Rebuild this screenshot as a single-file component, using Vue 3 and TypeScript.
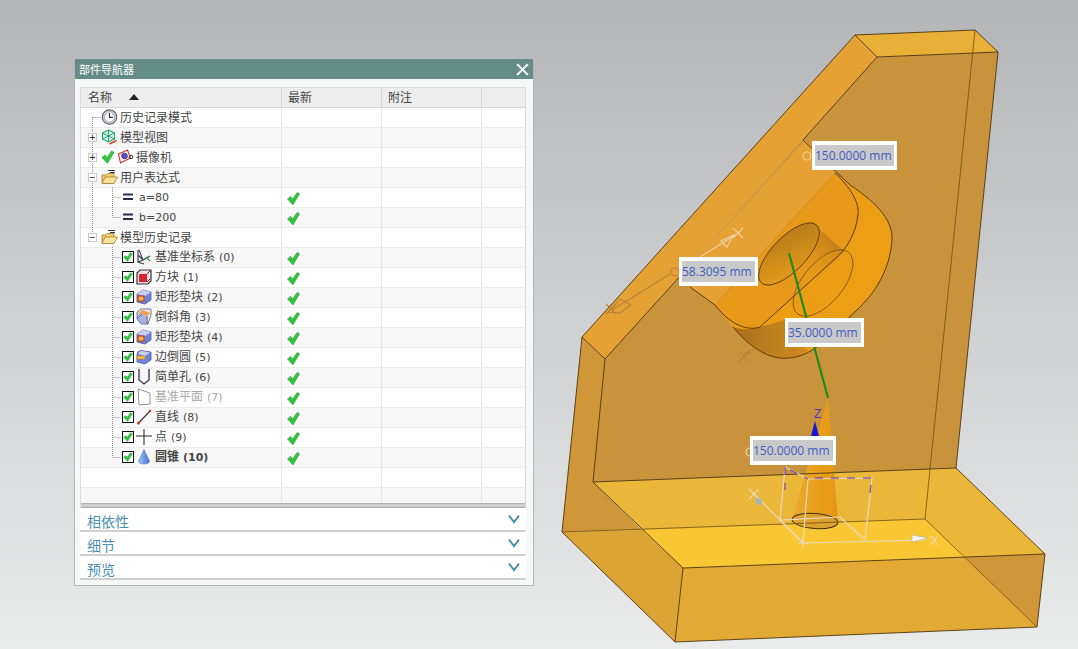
<script setup lang="ts">
type Row = {
  label?: string
  latin?: string
  level?: 0 | 1 | 2
  expander?: '+' | '-'
  status?: boolean
  checkbox?: boolean
  icon?: string
  current?: boolean
  muted?: boolean
  bold?: boolean
}

const rows: Row[] = [
  { label: '历史记录模式', level: 0, icon: 'clock' },
  { label: '模型视图', level: 0, expander: '+', icon: 'view' },
  { label: '摄像机', level: 0, expander: '+', icon: 'camera', status: true },
  { label: '用户表达式', level: 0, expander: '-', icon: 'folder' },
  { latin: 'a=80', level: 1, icon: 'equals', current: true },
  { latin: 'b=200', level: 1, icon: 'equals', current: true },
  { label: '模型历史记录', level: 0, expander: '-', icon: 'folder' },
  { label: '基准坐标系', latin: '(0)', level: 2, icon: 'csys', checkbox: true, current: true },
  { label: '方块', latin: '(1)', level: 2, icon: 'block', checkbox: true, current: true },
  { label: '矩形垫块', latin: '(2)', level: 2, icon: 'pad', checkbox: true, current: true },
  { label: '倒斜角', latin: '(3)', level: 2, icon: 'chamfer', checkbox: true, current: true },
  { label: '矩形垫块', latin: '(4)', level: 2, icon: 'pad', checkbox: true, current: true },
  { label: '边倒圆', latin: '(5)', level: 2, icon: 'blend', checkbox: true, current: true },
  { label: '简单孔', latin: '(6)', level: 2, icon: 'hole', checkbox: true, current: true },
  { label: '基准平面', latin: '(7)', level: 2, icon: 'plane', checkbox: true, current: true, muted: true },
  { label: '直线', latin: '(8)', level: 2, icon: 'line', checkbox: true, current: true },
  { label: '点', latin: '(9)', level: 2, icon: 'point', checkbox: true, current: true },
  { label: '圆锥', latin: '(10)', level: 2, icon: 'cone', checkbox: true, current: true, bold: true },
  {},
  {}
]

const sections = ['相依性', '细节', '预览']

const dimensions = [
  { text: '150.0000 mm', cls: 'dim-a' },
  { text: '58.3095 mm', cls: 'dim-b' },
  { text: '35.0000 mm', cls: 'dim-c' },
  { text: '150.0000 mm', cls: 'dim-d' }
]
</script>

<template>
  <div class="screen">
    <svg class="defs" width="0" height="0">
      <defs>
        <symbol id="i-check" viewBox="0 0 14 15">
          <path d="M0.5 8 L4 5.2 L6 8 L11 0.8 L13.6 2.6 L6.4 14.4 Z" fill="#2fc43c" stroke="#1d9a2b" stroke-width=".5" />
        </symbol>
        <symbol id="i-clock" viewBox="0 0 16 16">
          <circle cx="8" cy="8" r="7.2" fill="#c9ced6" stroke="#5f6772" stroke-width="1.2" />
          <circle cx="8" cy="8" r="5" fill="#fff" stroke="#8f97a2" stroke-width=".6" />
          <path d="M8 4v4.4h3.4" fill="none" stroke="#30343a" stroke-width="1.2" />
        </symbol>
        <symbol id="i-view" viewBox="0 0 16 16">
          <path d="M7 1 L13 4 L13 10 L7 13 L1 10 L1 4 Z" fill="#d7f3e4" stroke="#1fa06a" stroke-width="1.1" />
          <path d="M1 4 L7 7 L13 4 M7 7 V13 M7 1 V7 M1 10 L7 7 L13 10" fill="none" stroke="#1fa06a" stroke-width=".9" />
          <path d="M8 15 L15 11.5" stroke="#d9402b" stroke-width="1.6" />
        </symbol>
        <symbol id="i-camera" viewBox="0 0 16 16">
          <path d="M1 5 L10 1 L13 9 L3 14 Z" fill="#fdf0ef" stroke="#c8342a" stroke-width="1.1" />
          <circle cx="7" cy="7" r="2.8" fill="#5a4fc0" stroke="#2b2880" stroke-width=".8" />
          <circle cx="13.5" cy="8" r="1.8" fill="none" stroke="#333" stroke-width="1" />
        </symbol>
        <symbol id="i-folder" viewBox="0 0 17 16">
          <path d="M7 1.5 H14 M9 3.5 H14" stroke="#2e3350" stroke-width="1" />
          <path d="M1 6 H5 L6.5 4.5 H13 V14 H1 Z" fill="#f4cd69" stroke="#a9853a" stroke-width=".9" />
          <path d="M1 14.5 L4 8 H16.5 L13 14.5 Z" fill="#fbe39a" stroke="#a9853a" stroke-width=".9" />
        </symbol>
        <symbol id="i-equals" viewBox="0 0 12 10">
          <path d="M1 2.5 H11 M1 7 H11" stroke="#2d2b52" stroke-width="2" />
        </symbol>
        <symbol id="i-csys" viewBox="0 0 16 18">
          <path d="M2 2 V14 L8 16 M2 7 L7 12 L14 8 M2 14 L7 12 M3 2 L7 12" fill="none" stroke="#39404a" stroke-width="1.1" />
          <path d="M10 9 L14 13" stroke="#2f9e55" stroke-width="1.2" />
        </symbol>
        <symbol id="i-block" viewBox="0 0 16 18">
          <path d="M1 5 L4 2 H15 V13 L12 16 H1 Z" fill="#f7dfe0" stroke="#30333a" stroke-width="1.2" />
          <path d="M3 6 H11 V14 H3 Z" fill="#d7232f" />
          <path d="M11 6 L14 3 M11 14 L14 11" stroke="#7b1c22" stroke-width="1" />
        </symbol>
        <symbol id="i-pad" viewBox="0 0 16 18">
          <path d="M1 6 L7 2 L15 4 L15 12 L9 16 L1 14 Z" fill="#6d83d8" stroke="#4a5aa8" stroke-width=".8" />
          <path d="M1 6 L7 2 L15 4 L9 8 Z" fill="#c5cff2" />
          <rect x="2" y="8" width="6" height="5" fill="#f4b45a" stroke="#c93f1c" stroke-width="1.2" />
        </symbol>
        <symbol id="i-chamfer" viewBox="0 0 16 18">
          <path d="M1 4 L5 1 H15 V7 L12 16 H5 L1 11 Z" fill="#f4ead8" stroke="#5566b0" stroke-width=".9" />
          <path d="M2 5 L11 8 L14.5 5 L6 2 Z" fill="#ef9f58" />
          <path d="M1 11 L6 6 M11 8 V16" fill="none" stroke="#3d4150" stroke-width="1" />
          <path d="M1 5 V11 L5 16 H11 V8 Z" fill="#7f92dd" fill-opacity=".65" />
        </symbol>
        <symbol id="i-blend" viewBox="0 0 16 18">
          <path d="M1 6 Q1 3 5 2.5 L15 4 V12 L9 16 L1 14 Z" fill="#6d83d8" stroke="#4a5aa8" stroke-width=".8" />
          <path d="M2 6 Q3 3 6 3 L14 4.5 L9 8 Z" fill="#c5cff2" />
          <path d="M1 8 H9 V11 H1 Z" fill="#f5c24a" stroke="#c8801f" stroke-width=".7" />
        </symbol>
        <symbol id="i-hole" viewBox="0 0 16 18">
          <path d="M3 1 V12 L8 16 L13 12 V1" fill="none" stroke="#30343a" stroke-width="1.3" />
        </symbol>
        <symbol id="i-plane" viewBox="0 0 16 18">
          <path d="M2 1 L14 5 V16 L3 17 Z" fill="none" stroke="#8f9296" stroke-width="1" />
        </symbol>
        <symbol id="i-line" viewBox="0 0 16 18">
          <path d="M2.5 15 L14 3" stroke="#4a2a2a" stroke-width="1.1" />
          <circle cx="2.5" cy="15" r="1.5" fill="#d4322c" />
          <circle cx="14" cy="3" r="1.2" fill="#d4322c" />
        </symbol>
        <symbol id="i-point" viewBox="0 0 16 18">
          <path d="M8 1 V17 M0 8 H16" stroke="#2b2e33" stroke-width="1.1" />
        </symbol>
        <symbol id="i-cone" viewBox="0 0 16 18">
          <linearGradient id="cone-fill" x1="0" x2="1">
            <stop offset="0" stop-color="#a9c4f2" />
            <stop offset="1" stop-color="#3e72d2" />
          </linearGradient>
          <path d="M8 1.5 L13.5 13 Q13.5 16 8 16 Q2.5 16 2.5 13 Z" fill="url(#cone-fill)" stroke="#5a7cc0" stroke-width=".6" />
        </symbol>
      </defs>
    </svg>

    <!-- model -->
    <svg class="model" viewBox="0 0 1078 649" width="1078" height="649">
      <defs>
        <linearGradient id="boss-rim" x1="0" y1="0" x2="1" y2="1">
          <stop offset="0" stop-color="#ea9c14" />
          <stop offset="1" stop-color="#ec9f14" />
        </linearGradient>
        <linearGradient id="hole-wall" x1="1" y1="0" x2="0" y2="1">
          <stop offset="0" stop-color="#b27519" />
          <stop offset="1" stop-color="#eaa01c" />
        </linearGradient>
        <linearGradient id="cavity" x1="1" y1="0" x2="0" y2="1">
          <stop offset="0" stop-color="#a86c18" />
          <stop offset=".7" stop-color="#e0951a" stop-opacity=".2" />
        </linearGradient>
        <linearGradient id="wall-dark" x1="0" y1="0" x2="1" y2="0">
          <stop offset="0" stop-color="#a96f1c" />
          <stop offset="1" stop-color="#cf8d1e" />
        </linearGradient>
        <linearGradient id="cone-body" x1="0" x2="1">
          <stop offset="0" stop-color="#eeaa2c" />
          <stop offset="1" stop-color="#e49610" />
        </linearGradient>
      </defs>

      <!-- base -->
      <path d="M593 482 L956 468 L1045 554 L683 568 Z" fill="#ebb738" />
      <path d="M642 530 L925 519 L965 557 L683 568 Z" fill="#f8c733" />
      <path d="M683 568 L1045 554 L1037 627 L675 642 Z" fill="#e3a935" />
      <path d="M965 557 L1045 554 L1037 627 Z" fill="#cf9738" />
      <path d="M562 532 L642 530 L683 568 L675 642 Z" fill="#dba434" />
      <path d="M582 337 L605 359 L593 482 L642 530 L562 532 Z" fill="#cf9738" />

      <!-- upright plate -->
      <path d="M605 359 L877 57 L998 52 L956 468 L593 482 Z" fill="#c9933b" />
      <path d="M582 337 L855 35 L877 57 L605 359 Z" fill="#e6a135" />
      <path d="M855 35 L975 30 L998 52 L877 57 Z" fill="#e9b038" />

      <!-- boss -->
      <path d="M805 140 L835 173 L715 305 L690 287 L682 274 Z" fill="#e6a135" />
      <path d="M835 173 L850 185 C880 205 893 222 892 240 C890 270 875 293 857 310 L817 347 C803 357 790 359 780 358 C762 356 745 342 733 327 L715 305 Z" fill="url(#boss-rim)" />
      <path d="M733 327 C745 342 762 356 780 358 C790 359 800 356 808 351 L785 320 L760 327 C750 330 742 330 733 327 Z" fill="url(#wall-dark)" />
      <path d="M835 173 C850 187 860 203 858 215 C856 232 848 247 837 257 L760 327 C745 332 728 322 715 305 Z" fill="#e8991a" />
      <path d="M818 228 L845 252 L805 288 L785 285 Z" fill="url(#cavity)" />
      <ellipse cx="823" cy="283" rx="40" ry="20" transform="rotate(-50 823 283)" fill="#e99c18" fill-opacity=".35" stroke="#7a5215" stroke-width=".8" />
      <ellipse cx="789" cy="254" rx="40" ry="17" transform="rotate(-46 789 254)" fill="url(#hole-wall)" stroke="#5b3a12" stroke-width=".9" />
      <g fill="none" stroke="#5b3a12" stroke-width="1">
        <path d="M835 173 C850 187 860 203 858 215 C856 232 848 247 837 257 L760 327 C745 332 728 322 715 305" />
        <path d="M850 185 C880 205 893 222 892 240 C890 270 875 293 857 310 L817 347 C803 357 790 359 780 358 C762 356 745 342 733 327" />
        <path d="M690 287 L715 305 M803 140 L850 185" />
      </g>
      <path d="M835 173 L715 305" stroke="#d28a1e" stroke-width=".8" />

      <!-- cone -->
      <path d="M828 398 L838 520 L792 520 Z" fill="url(#cone-body)" />
      <ellipse cx="815" cy="521" rx="23" ry="7.5" transform="rotate(4 815 521)" fill="#dca12f" stroke="#3f2a0d" stroke-width="1" />
      <path d="M789 253 L828 398" stroke="#17891c" stroke-width="2" />

      <!-- edges -->
      <g fill="none" stroke="#4d3410" stroke-width=".9">
        <path d="M582 337 L855 35 L975 30 L998 52 L877 57 L855 35" />
        <path d="M582 337 L605 359 L682 274 M803 140 L877 57" />
        <path d="M998 52 L956 468 L1045 554 L1037 627 L675 642 L562 532 L582 337" />
        <path d="M605 359 L593 482 L956 468" />
        <path d="M593 482 L683 568 L675 642 M683 568 L1045 554" />
      </g>
      <path d="M975 30 L930 469 L925 519 L1037 627 M562 532 L925 519" fill="none" stroke="#6f4f17" stroke-width=".8" />

      <!-- datum axes -->
      <g fill="none" stroke="#e9d9bd" stroke-width="1.2">
        <path d="M753 493 L803 543 L925 540" />
        <path d="M785 467 L780 520 L840 517 L865 540" />
        <path d="M785 467 L808 479 L872 478 L865 540 M808 479 L803 543 M780 520 L803 543" />
        <path d="M749 489 L759 499 M759 489 L749 499 M798 543 H808 M803 538 V548" />
        <path d="M931 536 L938 545 M938 536 L931 545" />
      </g>
      <path d="M785 467 L785 490 M790 470 L808 479 M815 478 L872 478 L869 500" fill="none" stroke="#5b2fc0" stroke-width="1" stroke-dasharray="8 8" />
      <path d="M912 535 L928 538 L912 542 Z" fill="#f4f4f0" stroke="#a8a8a4" stroke-width=".5" />
      <path d="M755 497 L762 500 L761 506 L756 503 Z" fill="#a7b2b8" />
      <path d="M815 421 L819 436 L811 436 Z" fill="#1418d8" />
      <text class="axis-z" x="814" y="418">Z</text>

      <!-- dimension handles -->
      <g fill="none" stroke="#b98336" stroke-width="1.1">
        <path d="M612 310 L670 274" />
        <path d="M620 299 L631 305 L620 313 L608 312 Z" />
        <path d="M606 304 L616 314 M616 304 L606 314" />
        <circle cx="675" cy="272" r="4" />
        <path d="M738 362 L750 352 M739 350 L748 362 M744 354 L754 349" />
      </g>
      <g fill="none" stroke="#efcf9f" stroke-width="1.2">
        <circle cx="807" cy="156" r="4" />
        <circle cx="750" cy="452" r="4" stroke="#e8d8be" />
        <path d="M700 257 L740 232 M721 241 L733 235 L727 247 Z M733 228 L743 238 M743 228 L733 238" />
      </g>
    </svg>

    <div v-for="d in dimensions" :key="d.cls" class="dim" :class="d.cls">
      <span>{{ d.text }}</span>
    </div>

    <!-- part navigator -->
    <section class="panel">
      <header class="title">
        <span>部件导航器</span>
        <svg class="close" viewBox="0 0 12 12" width="13" height="13">
          <path d="M1 1 L11 11 M11 1 L1 11" stroke="#fff" stroke-width="1.8" />
        </svg>
      </header>

      <div class="body">
        <div class="tree">
          <div class="head">
            <div class="col-name">名称 <i class="sort"></i></div>
            <div class="col-new">最新</div>
            <div class="col-note">附注</div>
            <div class="col-end"></div>
          </div>

          <div class="rows">
            <svg class="guides" width="200" height="400">
              <path
                d="M11.5 10 V130 M11.5 10.5 H20 M31.5 80 V110 M31.5 90.5 H40 M31.5 110.5 H40 M31.5 140 V350 M31.5 150.5 H40 M31.5 170.5 H40 M31.5 190.5 H40 M31.5 210.5 H40 M31.5 230.5 H40 M31.5 250.5 H40 M31.5 270.5 H40 M31.5 290.5 H40 M31.5 310.5 H40 M31.5 330.5 H40 M31.5 350.5 H40"
                fill="none"
                stroke="#8f8f8f"
                stroke-dasharray="1 1"
              />
            </svg>
            <div v-for="(row, i) in rows" :key="i" class="row" :class="{ odd: i % 2 === 1 }">
              <div class="col-name name-cell" :class="row.icon ? 'lvl-' + row.level : ''">
                <template v-if="row.icon">
                  <span v-if="row.expander" class="expander">{{ row.expander === '+' ? '+' : '−' }}</span>
                  <svg v-if="row.status" class="ic status"><use href="#i-check" /></svg>
                  <span v-if="row.checkbox" class="box"><svg><use href="#i-check" /></svg></span>
                  <svg class="ic" :class="'ic-' + row.icon"><use :href="'#i-' + row.icon" /></svg>
                  <span class="label" :class="{ muted: row.muted, bold: row.bold }">
                    <template v-if="row.label">{{ row.label }}</template>
                    <span v-if="row.latin" class="latin" :class="{ spaced: row.label }">{{ row.latin }}</span>
                  </span>
                </template>
              </div>
              <div class="col-new">
                <svg v-if="row.current" class="tick"><use href="#i-check" /></svg>
              </div>
              <div class="col-note"></div>
              <div class="col-end"></div>
            </div>
          </div>
          <div class="hscroll"></div>
        </div>

        <div v-for="s in sections" :key="s" class="section">
          <span>{{ s }}</span>
          <svg viewBox="0 0 12 10" width="12" height="10">
            <path d="M1 1.5 L6 8 L11 1.5" fill="none" stroke="#4d8cb0" stroke-width="2" />
          </svg>
        </div>
      </div>
    </section>
  </div>
</template>

<style>
html,
body {
  margin: 0;
  overflow: hidden;
}
</style>

<style scoped>
.screen {
  position: relative;
  width: 1078px;
  height: 649px;
  overflow: hidden;
  background: linear-gradient(#b3b5b7, #e9ebeb);
  font-family: "Noto Sans CJK SC", "Liberation Sans", sans-serif;
  font-size: 12px;
  color: #454545;
}

.defs {
  position: absolute;
}

.model {
  position: absolute;
  left: 0;
  top: 0;
}

.axis-z {
  font-family: "Liberation Sans", sans-serif;
  font-size: 12px;
  fill: #5b2fd0;
}

.dim {
  position: absolute;
  box-sizing: border-box;
  height: 29px;
  padding: 4px 3px;
  background: #fff;
  display: flex;
}

.dim span {
  flex: 1;
  background: #c9c9c9;
  color: #3f5cc0;
  font-family: "Open Sans", "Liberation Sans", sans-serif;
  font-size: 12px;
  line-height: 21px;
  white-space: nowrap;
}

.dim-a {
  left: 812px;
  top: 141px;
  width: 85px;
}

.dim-b {
  left: 679px;
  top: 257px;
  width: 79px;
}

.dim-c {
  left: 785px;
  top: 318px;
  width: 79px;
}

.dim-d {
  left: 750px;
  top: 436px;
  width: 86px;
}

.panel {
  position: absolute;
  left: 74px;
  top: 59px;
  width: 460px;
  height: 527px;
  box-sizing: border-box;
  border: 1px solid #b4b6b6;
  border-top: 0;
  background: #f6f7f7;
  display: flex;
  flex-direction: column;
}

.title {
  height: 20px;
  background: #658d87;
  color: #fff;
  font-size: 11px;
  line-height: 19px;
  padding: 0 4px;
  display: flex;
  align-items: center;
  justify-content: space-between;
}

.body {
  padding: 8px 6px 0 5px;
}

.tree {
  width: 446px;
  box-sizing: border-box;
  border: 1px solid #dcdcdc;
  border-bottom: 0;
  background: #fff;
}

.head,
.row {
  display: flex;
}

.col-name {
  width: 201px;
}

.col-new,
.col-note {
  width: 100px;
}

.col-end {
  flex: 1;
}

.head {
  height: 19px;
  line-height: 17px;
  background: #ededed;
  font-size: 12px;
}

.head > div {
  box-sizing: border-box;
  padding-left: 6px;
  border-right: 1px solid #d6d6d6;
}

.head .col-name {
  padding-left: 7px;
}

.head .col-end {
  border-right: 0;
}

.sort {
  display: inline-block;
  width: 0;
  height: 0;
  margin-left: 14px;
  vertical-align: 2px;
  border-left: 5px solid transparent;
  border-right: 5px solid transparent;
  border-bottom: 6px solid #222;
}

.rows {
  position: relative;
  height: 396px;
  overflow: hidden;
}

.guides {
  position: absolute;
  left: 0;
  top: 0;
  z-index: 1;
}

.row {
  height: 20px;
  background: #fff;
  border-top: 1px solid #ebebeb;
  box-sizing: border-box;
}

.row:first-of-type {
  border-top-color: #d6d6d6;
}

.row.odd {
  background: #f7f7f7;
}

.row > div {
  box-sizing: border-box;
  border-right: 1px solid #e6e6e6;
  display: flex;
  align-items: center;
  padding-bottom: 1px;
}

.row .col-end {
  border-right: 0;
}

.row .col-new {
  padding-left: 6px;
}

.name-cell {
  position: relative;
  z-index: 2;
}

.lvl-0 {
  padding-left: 20px;
}

.lvl-1 {
  padding-left: 41px;
}

.lvl-2 {
  padding-left: 41px;
}

.expander {
  position: absolute;
  left: 7px;
  top: 5px;
  width: 9px;
  height: 9px;
  box-sizing: border-box;
  border: 1px solid #c9c9c9;
  background: #fff;
  color: #222;
  font: 10px/7px "Liberation Sans", sans-serif;
  text-align: center;
}

.ic {
  flex: none;
  width: 17px;
  height: 16px;
  margin-right: 2px;
}

.status {
  width: 14px;
  height: 14px;
  margin-right: 2px;
}

.ic-equals {
  width: 12px;
  height: 10px;
  margin-right: 5px;
}

.ic-csys,
.ic-block,
.ic-pad,
.ic-chamfer,
.ic-blend,
.ic-hole,
.ic-plane,
.ic-line,
.ic-point,
.ic-cone {
  width: 16px;
  height: 18px;
  margin-right: 3px;
}

.box {
  flex: none;
  width: 12px;
  height: 12px;
  box-sizing: border-box;
  border: 1px solid #111;
  background: #fff;
  margin-right: 2px;
  display: flex;
}

.box svg {
  width: 10px;
  height: 10px;
}

.tick {
  width: 13px;
  height: 15px;
  margin-top: 2px;
  margin-left: -1px;
}

.label {
  white-space: nowrap;
  line-height: 18px;
  margin-top: -1px;
}

.latin {
  font-family: "DejaVu Sans", sans-serif;
  font-size: 11px;
}

.spaced {
  margin-left: 4px;
}

.muted {
  color: #a8a8a8;
}

.bold {
  font-weight: 700;
}

.hscroll {
  height: 5px;
  background: #cfcfcf;
  border-top: 1px solid #b2b2b2;
  border-bottom: 1px solid #a8a8a8;
  box-sizing: border-box;
}

.section {
  width: 446px;
  height: 24px;
  box-sizing: border-box;
  background: #fff;
  border-bottom: 2px solid #cfcfcf;
  padding: 2px 6px 0 7px;
  display: flex;
  align-items: center;
  justify-content: space-between;
  color: #4a8fb0;
  font-size: 14px;
  line-height: 24px;
}

.section span {
  margin-top: 2px;
}

.section svg {
  margin-top: -2px;
}
</style>
